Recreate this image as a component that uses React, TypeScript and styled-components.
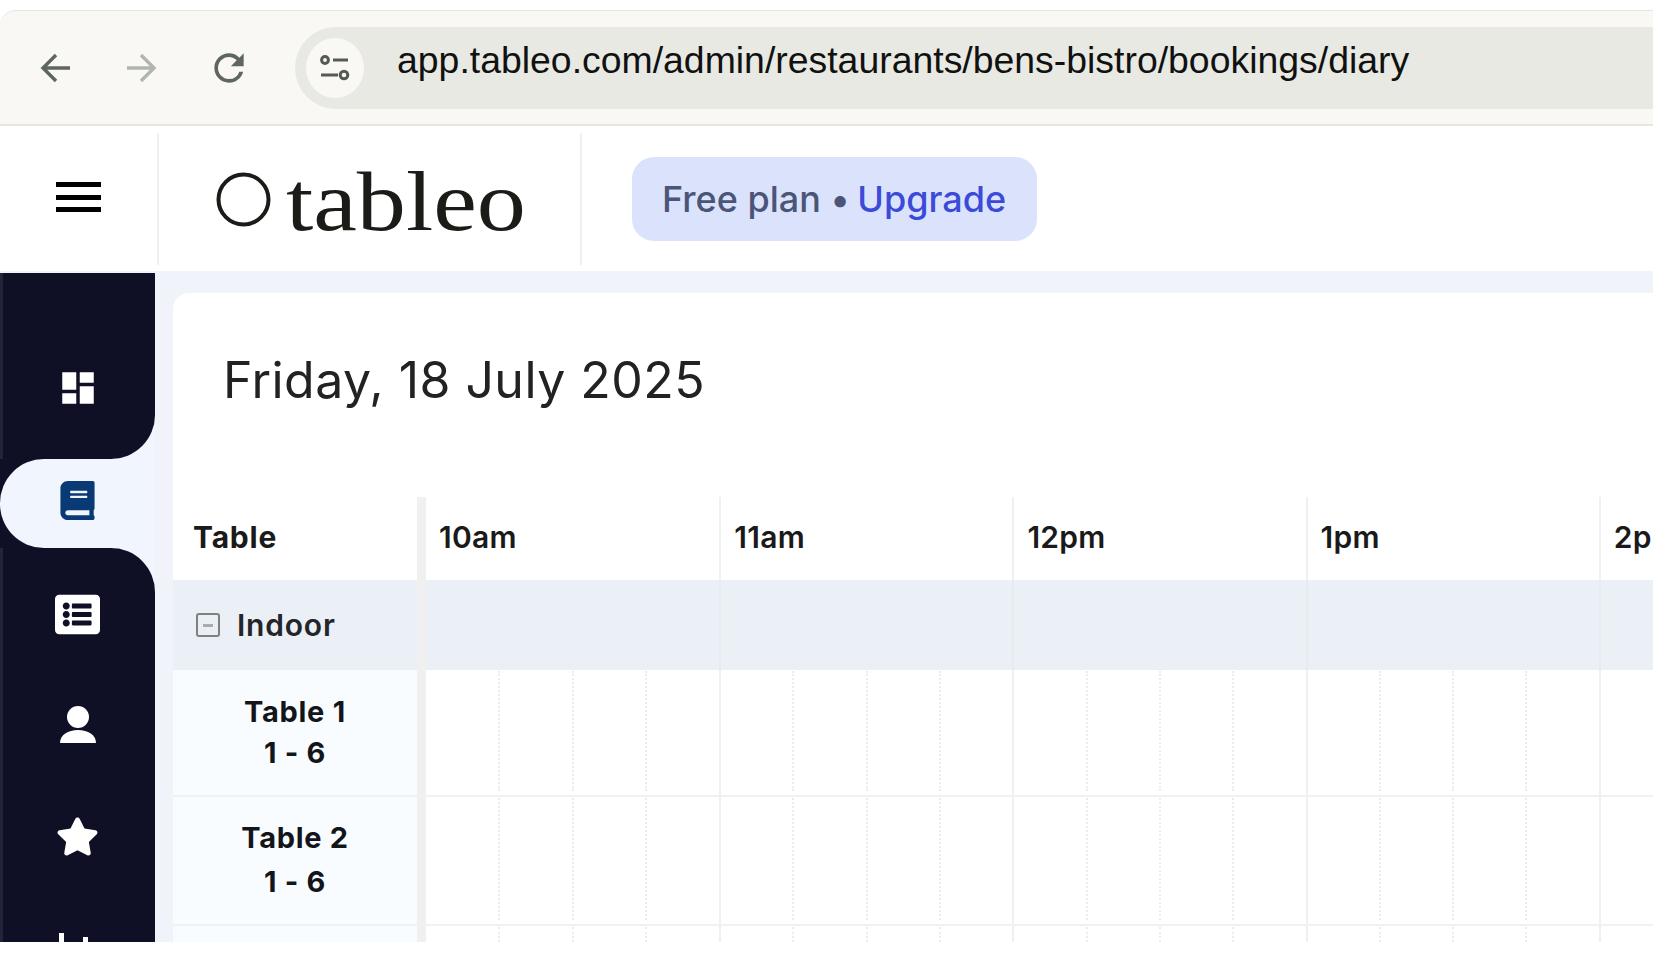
import React from "react";
import styled, { createGlobalStyle } from "styled-components";
import { FaBook, FaListAlt, FaStar } from "react-icons/fa";
import { MdDashboard, MdRefresh } from "react-icons/md";

const HOURS = ["10am", "11am", "12pm", "1pm", "2pm"];
const TABLES = [
  { name: "Table 1", seats: "1 - 6", height: 127, leading: 41 },
  { name: "Table 2", seats: "1 - 6", height: 129, leading: 44 },
  { name: "", seats: "", height: 60, leading: 41 },
];

const GlobalStyle = createGlobalStyle`
  html, body {
    margin: 0;
    padding: 0;
    background: #fff;
    overflow: hidden;
  }
  * {
    box-sizing: border-box;
  }
`;

const Frame = styled.div`
  width: 1653px;
  height: 932px;
  margin-top: 10px;
  display: flex;
  flex-direction: column;
  overflow: hidden;
  font-family: Inter, "Liberation Sans", sans-serif;
`;

const BrowserBar = styled.div`
  height: 116px;
  flex: none;
  display: flex;
  align-items: center;
  padding-left: 11px;
  background: #f9f8f4;
  border-top: 1px solid #e3e8df;
  border-bottom: 2px solid #e7e6e1;
  border-top-left-radius: 16px;
`;

const NavButton = styled.div<{ $tone: string }>`
  width: 87px;
  flex: none;
  display: flex;
  justify-content: center;
  color: ${(p) => p.$tone};
`;

const AddressPill = styled.div`
  height: 82px;
  flex: 1;
  margin-left: 23px;
  padding-left: 11px;
  display: flex;
  align-items: center;
  background: #e8e9e3;
  border-radius: 41px 0 0 41px;
`;

const TuneCircle = styled.div`
  width: 58px;
  height: 60px;
  flex: none;
  display: flex;
  align-items: center;
  justify-content: center;
  border-radius: 50%;
  background: #f9f8f4;
`;

const UrlText = styled.div`
  margin-left: 33px;
  padding-bottom: 16px;
  font-family: "Liberation Sans", Arial, sans-serif;
  font-size: 37.4px;
  line-height: 44px;
  color: #111;
  white-space: nowrap;
`;

const Header = styled.header`
  height: 145px;
  flex: none;
  display: flex;
  padding: 7px 0 6px;
  background: #fff;
`;

const MenuSlot = styled.div`
  width: 159px;
  flex: none;
  display: flex;
  align-items: center;
  justify-content: center;
  padding-bottom: 4px;
  border-right: 2px solid #f0f0f0;
`;

const LogoSlot = styled.div`
  width: 423px;
  flex: none;
  display: flex;
  align-items: center;
  gap: 15px;
  padding-left: 57px;
  border-right: 2px solid #f0f0f0;
`;

const LogoWord = styled.span`
  display: inline-block;
  padding-top: 4px;
  font-family: "Liberation Serif", "Times New Roman", serif;
  font-size: 85px;
  line-height: 90px;
  color: #1b1c17;
  transform: scaleX(1.155);
  transform-origin: left center;
`;

const PlanBadge = styled.div`
  width: 405px;
  height: 84px;
  margin: 24px 0 0 50px;
  display: flex;
  align-items: center;
  padding-left: 30px;
  background: #dbe3fc;
  border-radius: 22px;
  font-size: 36px;
  font-weight: 500;
  color: #4a5578;
  white-space: nowrap;
`;

const UpgradeLink = styled.span`
  margin-left: -2px;
  color: #3b4bd8;
`;

const Body = styled.div`
  flex: 1;
  min-height: 0;
  display: flex;
  background: #f1f3fa;
`;

const Rail = styled.nav`
  width: 155px;
  flex: none;
  display: flex;
  flex-direction: column;
  margin-top: 2px;
  overflow: hidden;
  background: #0f0f25;
`;

const NavSlot = styled.div<{ $active?: boolean }>`
  flex: none;
  background: ${(p) => (p.$active ? "#0f0f25" : "#f1f5fe")};
`;

const NavTile = styled.div<{ $corner: "active" | "above" | "below" }>`
  display: flex;
  flex-direction: column;
  align-items: center;
  color: #fff;
  background: ${(p) => (p.$corner === "active" ? "#f1f5fe" : "#0f0f25")};
  box-shadow: ${(p) => (p.$corner === "active" ? "none" : "inset 3px 0 0 #23233a")};
  border-radius: ${(p) =>
    p.$corner === "active"
      ? "44px 0 0 44px"
      : p.$corner === "above"
        ? "0 0 44px 0"
        : "0 44px 0 0"};
  padding: ${(p) =>
    p.$corner === "above"
      ? "59px 0 15px"
      : p.$corner === "below"
        ? "10px 0 0"
        : "0"};
`;

const NavRow = styled.div<{ $height?: number; $lift?: number }>`
  height: ${(p) => p.$height ?? 112}px;
  width: 100%;
  padding-bottom: ${(p) => p.$lift ?? 0}px;
  display: flex;
  align-items: center;
  justify-content: center;
`;

const Workspace = styled.main`
  flex: 1;
  min-width: 0;
  margin: 22px 0 0 18px;
  overflow: hidden;
  background: #fff;
  border-top-left-radius: 16px;
`;

const TitleBlock = styled.div`
  height: 204px;
  padding: 58px 0 0 50px;
`;

const DateTitle = styled.h1`
  margin: 0;
  font-size: 50px;
  line-height: 58px;
  letter-spacing: 0.45px;
  font-weight: 400;
  color: #222;
  white-space: nowrap;
`;

const GridRow = styled.div<{ $height: number; $tint?: string; $rule?: boolean }>`
  height: ${(p) => p.$height}px;
  display: flex;
  background: ${(p) => p.$tint ?? "transparent"};
  border-bottom: ${(p) => (p.$rule ? "2px solid #f1f1f1" : "none")};
`;

const NameCell = styled.div<{ $tint?: string }>`
  width: 253px;
  flex: none;
  display: flex;
  align-items: center;
  background: ${(p) => p.$tint ?? "transparent"};
  border-right: 9px solid #f0f0f0;
`;

const ColumnHeading = styled.span`
  padding: 0 0 4px 20px;
  font-size: 30px;
  letter-spacing: 0.8px;
  font-weight: 700;
  color: #1a1a1a;
`;

const GroupToggle = styled.span`
  width: 24px;
  height: 24px;
  margin-left: 23px;
  flex: none;
  display: flex;
  align-items: center;
  justify-content: center;
  border: 2px solid #7d8085;
  border-radius: 3px;

  &::after {
    content: "";
    width: 10px;
    height: 3px;
    background: #a9acb2;
  }
`;

const GroupLabel = styled.span`
  margin-left: 17px;
  font-size: 30px;
  letter-spacing: 0.8px;
  font-weight: 600;
  color: #24252a;
`;

const TableInfo = styled.div<{ $leading: number }>`
  width: 100%;
  padding-bottom: 2px;
  text-align: center;
  font-size: 29px;
  letter-spacing: 0.7px;
  line-height: ${(p) => p.$leading}px;
  font-weight: 700;
  color: #14151a;
`;

const Track = styled.div`
  flex: none;
  display: flex;
`;

const Hour = styled.div<{ $first?: boolean; $line?: string }>`
  width: 293.2px;
  flex: none;
  display: flex;
  border-left: ${(p) => (p.$first ? "0" : `2px solid ${p.$line ?? "#f0f0f0"}`)};
`;

const HourLabel = styled.span`
  align-self: center;
  padding: 0 0 4px 13px;
  font-size: 30px;
  letter-spacing: 0.3px;
  font-weight: 600;
  color: #1a1a1a;
`;

const Quarter = styled.div<{ $first?: boolean }>`
  flex: 1;
  margin: 1px 0 4px;
  border-left: ${(p) => (p.$first ? "0" : "2px dotted #ececec")};
`;

const ArrowIcon = ({ flip }: { flip?: boolean }) => (
  <svg
    width="30"
    height="30"
    viewBox="0 0 30 30"
    fill="none"
    stroke="currentColor"
    strokeWidth="3.4"
    style={flip ? { transform: "scaleX(-1)" } : undefined}
  >
    <path d="M30 15H4M16 2 3 15l13 13" />
  </svg>
);

const TuneIcon = () => (
  <svg width="30" height="28" viewBox="0 0 30 28" fill="none" stroke="#555a56" strokeWidth="3">
    <circle cx="5" cy="6" r="3.4" />
    <path d="M13 6h15M1 21h17" />
    <circle cx="24" cy="21" r="3.8" />
  </svg>
);

const MenuIcon = () => (
  <svg width="45" height="30" viewBox="0 0 45 30" fill="#000">
    <rect y="0" width="45" height="5" />
    <rect y="13" width="45" height="5" />
    <rect y="25" width="45" height="5" />
  </svg>
);

const LogoRing = () => (
  <svg width="55" height="55" viewBox="0 0 55 55" fill="none" stroke="#1b1c17" strokeWidth="4">
    <circle cx="27.5" cy="27.5" r="25" />
  </svg>
);

const PersonIcon = () => (
  <svg width="36" height="37" viewBox="0 0 36 37" fill="#fff">
    <circle cx="18" cy="11" r="11" />
    <path d="M0 37c0-8 8-13 18-13s18 5 18 13z" />
  </svg>
);

const ChartIcon = () => (
  <svg width="38" height="40" viewBox="0 0 38 40" fill="#fff">
    <rect x="0" y="3" width="5" height="37" />
    <rect x="16" y="12" width="5" height="28" />
    <rect x="24" y="7" width="5" height="33" />
    <rect x="32" y="12" width="5" height="28" />
  </svg>
);

const TimeCells = () => (
  <Track>
    {HOURS.map((hour, h) => (
      <Hour key={hour} $first={h === 0}>
        {[0, 1, 2, 3].map((q) => (
          <Quarter key={q} $first={q === 0} />
        ))}
      </Hour>
    ))}
  </Track>
);

export default function App() {
  return (
    <Frame>
      <GlobalStyle />
      <BrowserBar>
        <NavButton $tone="#5e665f">
          <ArrowIcon />
        </NavButton>
        <NavButton $tone="#b1b5af">
          <ArrowIcon flip />
        </NavButton>
        <NavButton $tone="#5e665f">
          <MdRefresh size={44} />
        </NavButton>
        <AddressPill>
          <TuneCircle>
            <TuneIcon />
          </TuneCircle>
          <UrlText>app.tableo.com/admin/restaurants/bens-bistro/bookings/diary</UrlText>
        </AddressPill>
      </BrowserBar>

      <Header>
        <MenuSlot>
          <MenuIcon />
        </MenuSlot>
        <LogoSlot>
          <LogoRing />
          <LogoWord>tableo</LogoWord>
        </LogoSlot>
        <PlanBadge>
          Free plan •&nbsp;<UpgradeLink>Upgrade</UpgradeLink>
        </PlanBadge>
      </Header>

      <Body>
        <Rail>
          <NavSlot>
            <NavTile $corner="above">
              <NavRow>
                <MdDashboard size={42} />
              </NavRow>
            </NavTile>
          </NavSlot>
          <NavSlot $active>
            <NavTile $corner="active">
              <NavRow $height={89} $lift={6}>
                <FaBook size={39} color="#0a3a75" />
              </NavRow>
            </NavTile>
          </NavSlot>
          <NavSlot>
            <NavTile $corner="below">
              <NavRow>
                <FaListAlt size={45} />
              </NavRow>
              <NavRow $lift={4}>
                <PersonIcon />
              </NavRow>
              <NavRow $lift={4}>
                <FaStar size={43} />
              </NavRow>
              <NavRow>
                <ChartIcon />
              </NavRow>
            </NavTile>
          </NavSlot>
        </Rail>

        <Workspace>
          <TitleBlock>
            <DateTitle>Friday, 18 July 2025</DateTitle>
          </TitleBlock>

          <GridRow $height={83}>
            <NameCell>
              <ColumnHeading>Table</ColumnHeading>
            </NameCell>
            <Track>
              {HOURS.map((hour, h) => (
                <Hour key={hour} $first={h === 0}>
                  <HourLabel>{hour}</HourLabel>
                </Hour>
              ))}
            </Track>
          </GridRow>

          <GridRow $height={90} $tint="#ebeff6">
            <NameCell>
              <GroupToggle />
              <GroupLabel>Indoor</GroupLabel>
            </NameCell>
            <Track>
              {HOURS.map((hour, h) => (
                <Hour key={hour} $first={h === 0} $line="#e8ebf0" />
              ))}
            </Track>
          </GridRow>

          {TABLES.map((table, i) => (
            <GridRow key={i} $height={table.height} $rule={i < 2}>
              <NameCell $tint="#f8fcff">
                <TableInfo $leading={table.leading}>
                  {table.name}
                  {table.name && <br />}
                  {table.seats}
                </TableInfo>
              </NameCell>
              <TimeCells />
            </GridRow>
          ))}
        </Workspace>
      </Body>
    </Frame>
  );
}
